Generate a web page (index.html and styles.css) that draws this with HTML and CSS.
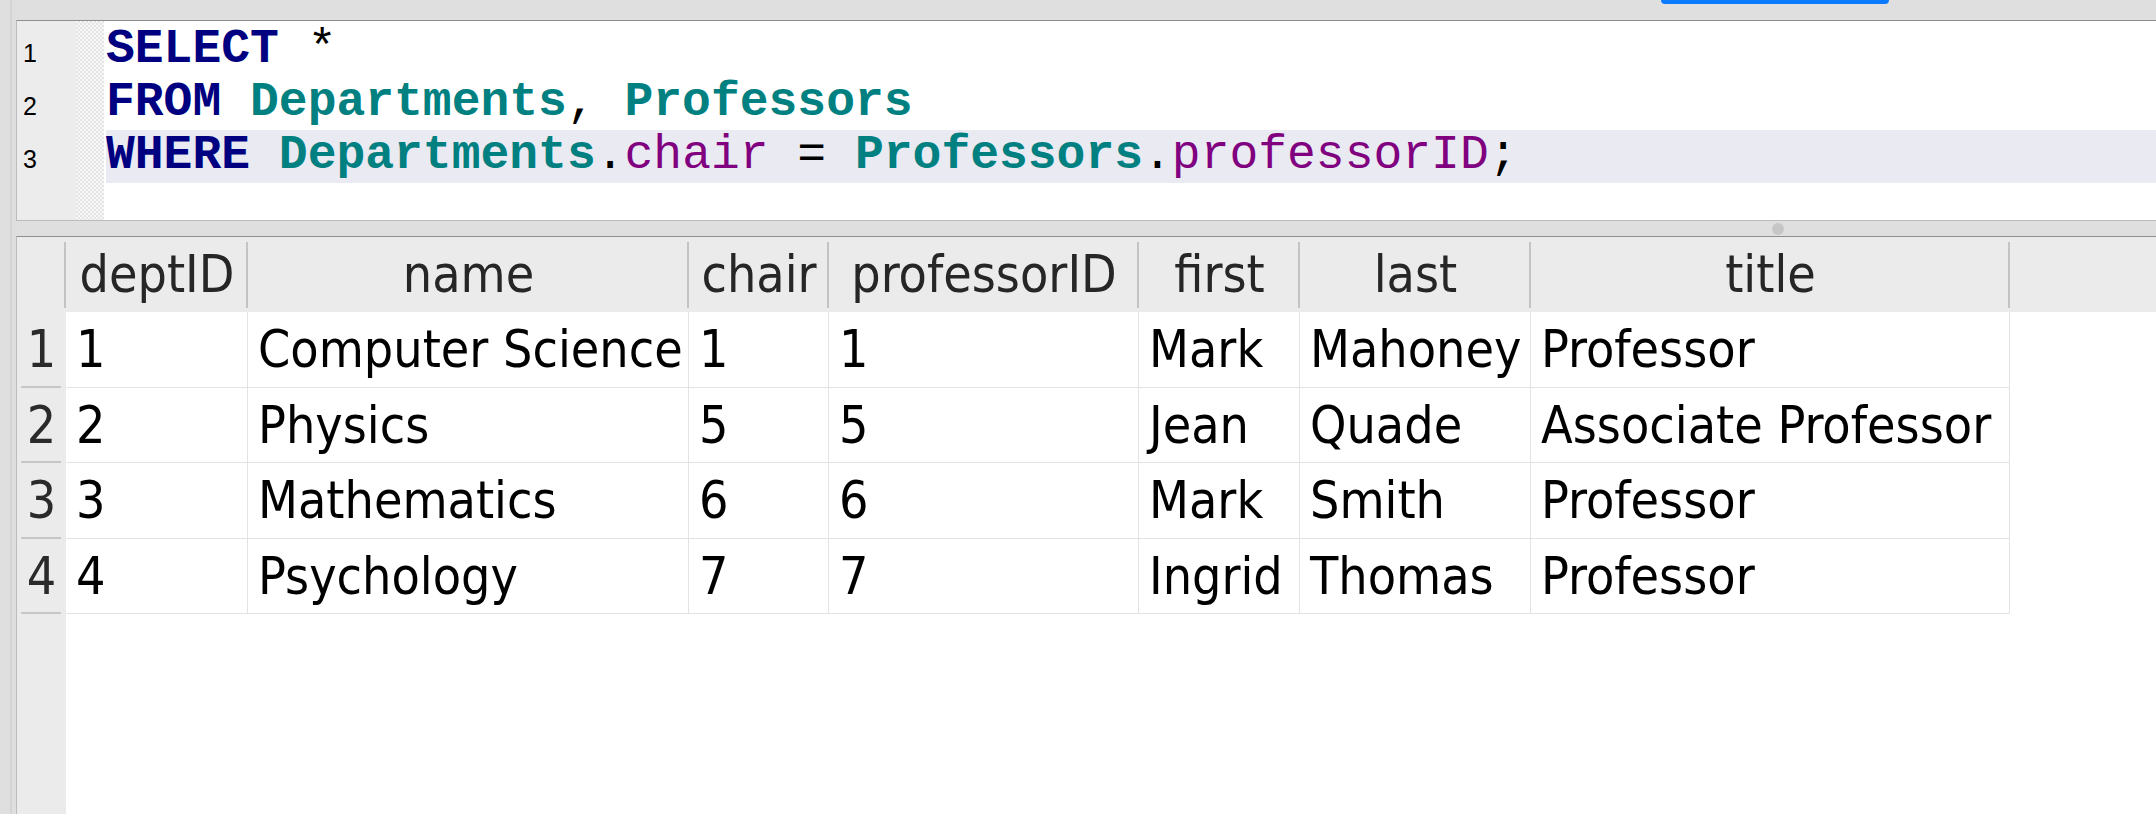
FILE: index.html
```html
<!DOCTYPE html>
<html>
<head>
<meta charset="utf-8">
<link rel="stylesheet" href="styles.css">
</head>
<body>
<div class="app">
  <div class="topbar"><div class="run-btn"></div></div>
  <div class="editor">
    <div class="gutter">
      <div class="ln">1</div>
      <div class="ln">2</div>
      <div class="ln">3</div>
    </div>
    <div class="hatch"></div>
    <div class="code">
      <div class="line"><span class="kw">SELECT</span> *</div>
      <div class="line"><span class="kw">FROM</span> <span class="tb">Departments</span>, <span class="tb">Professors</span></div>
      <div class="line cur"><span class="kw">WHERE</span> <span class="tb">Departments</span>.<span class="col">chair</span> = <span class="tb">Professors</span>.<span class="col">professorID</span>;</div>
    </div>
  </div>
  <div class="splitter"><div class="grip"></div></div>
  <div class="results">
    <div class="hdr">
      <div class="hc"></div>
      <div class="hc">deptID</div>
      <div class="hc">name</div>
      <div class="hc">chair</div>
      <div class="hc">professorID</div>
      <div class="hc">first</div>
      <div class="hc">last</div>
      <div class="hc">title</div>
    </div>
    <div class="row">
      <div class="rn">1</div>
      <div class="dc">1</div>
      <div class="dc">Computer Science</div>
      <div class="dc">1</div>
      <div class="dc">1</div>
      <div class="dc">Mark</div>
      <div class="dc">Mahoney</div>
      <div class="dc">Professor</div>
    </div>
    <div class="row">
      <div class="rn">2</div>
      <div class="dc">2</div>
      <div class="dc">Physics</div>
      <div class="dc">5</div>
      <div class="dc">5</div>
      <div class="dc">Jean</div>
      <div class="dc">Quade</div>
      <div class="dc">Associate Professor</div>
    </div>
    <div class="row">
      <div class="rn">3</div>
      <div class="dc">3</div>
      <div class="dc">Mathematics</div>
      <div class="dc">6</div>
      <div class="dc">6</div>
      <div class="dc">Mark</div>
      <div class="dc">Smith</div>
      <div class="dc">Professor</div>
    </div>
    <div class="row">
      <div class="rn">4</div>
      <div class="dc">4</div>
      <div class="dc">Psychology</div>
      <div class="dc">7</div>
      <div class="dc">7</div>
      <div class="dc">Ingrid</div>
      <div class="dc">Thomas</div>
      <div class="dc">Professor</div>
    </div>
  </div>
</div>
</body>
</html>
```

FILE: styles.css
```css
html, body {
  margin: 0;
  padding: 0;
}

body {
  width: 2156px;
  height: 814px;
  overflow: hidden;
  background: linear-gradient(to right, #dfdfdf 10px, #d4d4d4 10px, #d4d4d4 12px, #dfdfdf 12px);
}

.app {
  margin-left: 16px;
  height: 814px;
  display: flex;
  flex-direction: column;
}

.topbar {
  height: 20px;
  display: flex;
}

.run-btn {
  margin-left: 1645px;
  width: 228px;
  height: 4px;
  background: #0a7bff;
  border-radius: 0 0 7px 7px;
}

.editor {
  height: 199px;
  border-top: 1px solid #8e8e8e;
  border-left: 1px solid #bcbcbc;
  border-bottom: 1px solid #bcbcbc;
  background: #fff;
  display: flex;
}

.gutter {
  width: 59px;
  box-sizing: border-box;
  background: #ececec;
  padding-top: 6px;
  padding-right: 39px;
  text-align: right;
  font-family: "Liberation Sans", Arial, sans-serif;
  font-size: 25px;
  color: #000;
}

.ln {
  height: 53px;
  line-height: 53px;
}

.hatch {
  width: 28px;
  background: repeating-conic-gradient(#e3e3e3 0 25%, #f8f8f8 0 50%) 0 0 / 4px 4px;
}

.code {
  flex: 1;
  margin-left: 2px;
  padding-top: 3px;
  font-family: "Liberation Mono", "Courier New", monospace;
  font-size: 48px;
  color: #000;
}

.line {
  height: 53px;
  line-height: 51px;
  white-space: pre;
}

.line.cur {
  background: #eaeaf3;
}

.kw {
  color: #000080;
  font-weight: bold;
}

.tb {
  color: #008080;
  font-weight: bold;
}

.col {
  color: #800080;
}

.splitter {
  height: 15px;
  display: flex;
  align-items: center;
}

.grip {
  margin-left: 1756px;
  width: 12px;
  height: 12px;
  border-radius: 50%;
  background: #c6c6c6;
}

.results {
  flex: 1;
  border-top: 1px solid #8e8e8e;
  border-left: 1px solid #bcbcbc;
  background: linear-gradient(to right, #ebebeb 49px, #ffffff 49px);
  font-family: "DejaVu Sans Condensed", "DejaVu Sans", sans-serif;
  font-size: 51.5px;
}

.hdr,
.row {
  display: grid;
  grid-template-columns: 49px 182px 441px 140px 310px 161px 231px 479px;
}

.hdr {
  height: 75px;
  background: #ebebeb;
}

.hc {
  line-height: 75px;
  text-align: center;
  color: #262626;
  white-space: nowrap;
  overflow: hidden;
  background: linear-gradient(#c3c3c3, #c3c3c3) no-repeat right center / 2px 66px;
}

.row {
  height: 75.5px;
}

.rn {
  line-height: 75px;
  text-align: center;
  color: #2a2a2a;
  background: linear-gradient(#c6c6c6, #c6c6c6) no-repeat 4px bottom / 40px 2px, #ebebeb;
}

.dc {
  box-sizing: border-box;
  background: #fff;
  border-right: 1px solid #e3e3e3;
  border-bottom: 1px solid #e3e3e3;
  padding-left: 10px;
  line-height: 74px;
  white-space: nowrap;
  overflow: hidden;
  color: #000;
}
```
